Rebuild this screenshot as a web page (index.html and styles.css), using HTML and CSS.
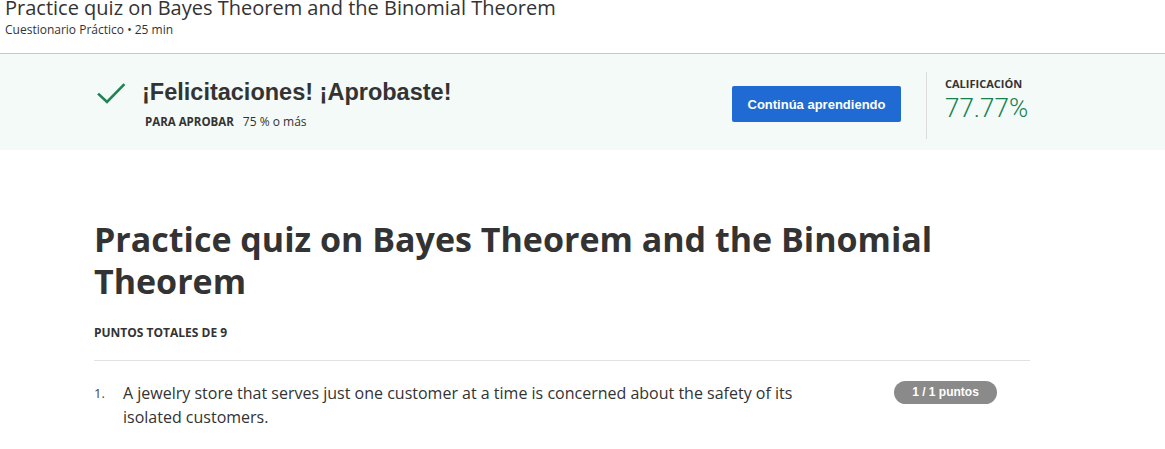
FILE: index.html
```html
<!DOCTYPE html>
<html lang="es">
<head>
<meta charset="utf-8">
<title>Practice quiz on Bayes Theorem and the Binomial Theorem</title>
<link rel="stylesheet" href="styles.css">
</head>
<body>
<header class="topbar">
  <div class="topbar-title">Practice quiz on Bayes Theorem and the Binomial Theorem</div>
  <div class="topbar-sub">Cuestionario Práctico • 25 min</div>
</header>

<section class="result">
  <div class="result-inner">
    <div class="result-main">
      <svg class="check" width="30" height="24" viewBox="0 0 30 24" aria-hidden="true">
        <path d="M3 12.5 L11 20 L27.5 3" fill="none" stroke="#1f8354" stroke-width="2.6" stroke-linecap="square"/>
      </svg>
      <div class="result-text">
        <h2 class="result-heading">¡Felicitaciones! ¡Aprobaste!</h2>
        <div class="pass-line"><span class="pass-label">PARA APROBAR</span><span class="pass-value">75 % o más</span></div>
      </div>
    </div>
    <button class="btn-continue">Continúa aprendiendo</button>
    <div class="divider"></div>
    <div class="grade">
      <div class="grade-label">CALIFICACIÓN</div>
      <div class="grade-value">77.77%</div>
    </div>
  </div>
</section>

<main class="content">
  <h1 class="quiz-title">Practice quiz on Bayes Theorem and the Binomial Theorem</h1>
  <div class="total-points">PUNTOS TOTALES DE 9</div>
  <div class="question">
    <div class="q-num">1.</div>
    <div class="q-text">A jewelry store that serves just one customer at a time is concerned about the safety of its isolated customers.</div>
    <div class="q-badge">1 / 1 puntos</div>
  </div>
</main>
</body>
</html>
```

FILE: styles.css
```css
* { box-sizing: border-box; }

body {
  margin: 0;
  font-family: "Open Sans", "Liberation Sans", sans-serif;
  color: #333;
  background: #fff;
  overflow: hidden;
}

.topbar {
  display: flow-root;
  height: 54px;
  padding-left: 5px;
  border-bottom: 1px solid #c8c8c8;
}

.topbar-title {
  margin-top: -2px;
  font-size: 20px;
  line-height: 20px;
  color: #333;
}

.topbar-sub {
  margin-top: 4px;
  font-size: 12px;
  line-height: 16px;
  color: #333;
}

.result {
  height: 96px;
  background: #f3faf7;
}

.result-inner {
  margin-left: 94px;
  width: 936px;
  height: 100%;
  display: flex;
  align-items: center;
}

.result-main {
  flex: 1;
  display: flex;
  align-items: flex-start;
}

.check {
  margin-left: 2px;
  margin-top: 7px;
}

.result-text {
  margin-left: 16px;
  margin-top: 3px;
}

.result-heading {
  margin: 0;
  font-family: "Liberation Sans", Arial, sans-serif;
  font-weight: bold;
  font-size: 23.5px;
  line-height: 28px;
  color: #333;
}

.pass-line {
  margin-top: 8px;
  margin-left: 3px;
  font-size: 12px;
  line-height: 16px;
}

.pass-label {
  font-weight: 700;
  font-size: 11.5px;
  margin-right: 9px;
}

.btn-continue {
  width: 169px;
  height: 36px;
  border: 0;
  border-radius: 2px;
  background: #1f6bd3;
  color: #fff;
  font-family: "Liberation Sans", Arial, sans-serif;
  font-weight: bold;
  font-size: 13px;
  margin-top: 4px;
  padding: 0;
}

.divider {
  width: 1px;
  height: 67px;
  background: #dcdcdc;
  margin-left: 25px;
  margin-right: 18px;
  align-self: center;
  margin-top: 6px;
}

.grade {
  width: 85px;
  align-self: flex-start;
  margin-top: 22px;
}

.grade-label {
  font-size: 11px;
  font-weight: 700;
  line-height: 16px;
  color: #333;
}

.grade-value {
  margin-top: 3px;
  font-family: Roboto, "Liberation Sans", sans-serif;
  font-weight: 300;
  font-size: 26px;
  line-height: 26px;
  color: #17804f;
}

.content {
  margin-left: 94px;
  width: 936px;
  padding-top: 68px;
}

.quiz-title {
  margin: 0;
  font-size: 34px;
  line-height: 42px;
  font-weight: 700;
  color: #333;
  max-width: 900px;
}

.total-points {
  margin-top: 23px;
  font-size: 12px;
  font-weight: 700;
  line-height: 16px;
  padding-bottom: 19px;
  border-bottom: 1px solid #e1e1e1;
}

.question {
  display: flex;
  align-items: flex-start;
  padding-top: 20px;
}

.q-num {
  width: 29px;
  font-size: 13px;
  line-height: 24px;
  flex-shrink: 0;
  color: #444;
}

.q-text {
  width: 720px;
  font-size: 16px;
  line-height: 24px;
  color: #333;
}

.q-badge {
  margin-left: 51px;
  margin-top: 0;
  width: 103px;
  height: 23px;
  border-radius: 12px;
  background: #8a8a8a;
  color: #fff;
  font-family: "Liberation Sans", Arial, sans-serif;
  font-weight: bold;
  font-size: 12px;
  line-height: 23px;
  text-align: center;
}
```
